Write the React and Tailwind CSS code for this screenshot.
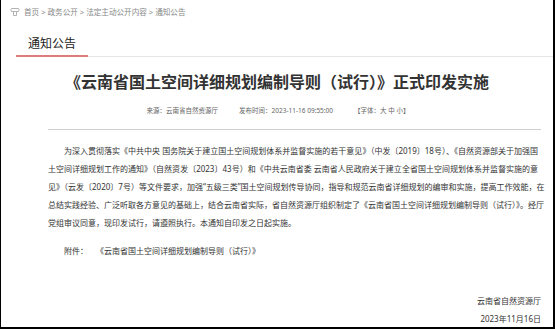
const lines = [
  '为深入贯彻落实《中共中央 国务院关于建立国土空间规划体系并监督实施的若干意见》（中发〔2019〕18号）、《自然资源部关于加强国',
  '土空间详细规划工作的通知》（自然资发〔2023〕43号）和《中共云南省委 云南省人民政府关于建立全省国土空间规划体系并监督实施的意',
  '见》（云发〔2020〕7号）等文件要求，加强“五级三类”国土空间规划传导协同，指导和规范云南省详细规划的编审和实施，提高工作效能，在',
  '总结实践经验、广泛听取各方意见的基础上，结合云南省实际，省自然资源厅组织制定了《云南省国土空间详细规划编制导则（试行）》。经厅',
];

export default function App() {
  return (
    <div
      className="w-[555px] h-[329px] overflow-hidden bg-white border-l border-r-2 border-b-2 border-black text-[#333]"
      style={{ fontFamily: '"Noto Sans", "Noto Sans CJK SC", sans-serif' }}
    >
      {/* breadcrumb */}
      <div className="flex items-center gap-[4px] pl-[9px] pt-[6px] h-[18px] text-[7.6px] leading-[12px] text-[#888]">
        <svg width="10" height="10" viewBox="0 0 10 10" fill="none" stroke="#aaa" strokeWidth="0.9">
          <rect x="1" y="1.5" width="8" height="3" rx="1" />
          <path d="M3.5 4.5 V8.5 H6.5 V4.5" />
        </svg>
        <span>首页 &gt; 政务公开 &gt; 法定主动公开内容 &gt; 通知公告</span>
      </div>

      {/* section tab */}
      <div className="ml-[15px] mt-[18px] border-b border-[#e6e6e6]">
        <div className="w-[72px] -mb-px border-b-2 border-[#dd7b7d] pb-[3px] text-center text-[12px] leading-[16px] text-[#222]">
          通知公告
        </div>
      </div>

      {/* title */}
      <h1 className="mt-[15px] text-center text-[16px] leading-[20px] font-bold text-[#333]">
        《云南省国土空间详细规划编制导则（试行）》正式印发实施
      </h1>

      {/* meta */}
      <div className="mt-[14px] flex justify-center gap-[21px] text-[6.5px] leading-[10px] text-[#666] pl-[2px]">
        <span>来源：云南省自然资源厅</span>
        <span>发布时间：2023-11-16 09:55:00</span>
        <span>【字体：大 中 小】</span>
      </div>

      <div className="ml-[47px] w-[493px]">
        <div className="mt-[13px] border-t border-[#cfcfcf]" />

        <div className="mt-[12px] w-[490px] text-[8px] leading-[18px] text-[#333]">
          {lines.map((t, i) => (
            <div key={i} className={`whitespace-nowrap text-justify [text-align-last:justify] ${i === 0 ? 'pl-[16px]' : ''}`}>
              {t}
            </div>
          ))}
          <div className="whitespace-nowrap">党组审议同意，现印发试行，请遵照执行。本通知自印发之日起实施。</div>
        </div>

        <div className="mt-[10px] flex gap-[8px] pl-[16px] text-[8px] leading-[18px] text-[#333]">
          <span>附件：</span>
          <span>《云南省国土空间详细规划编制导则（试行）》</span>
        </div>

        <div className="mt-[32px] flex flex-col items-end text-[8px] leading-[18px] text-[#333]">
          <span>云南省自然资源厅</span>
          <span>2023年11月16日</span>
        </div>
      </div>
    </div>
  );
}
